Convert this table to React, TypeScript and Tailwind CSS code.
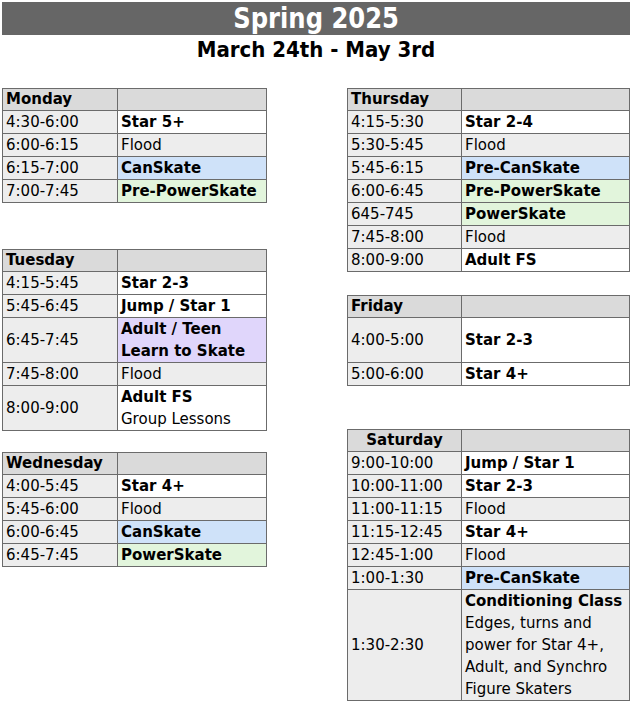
type Line = { text: string; bold?: boolean };

type Row = {
  time: string;
  lines: Line[];
  bg?: "white" | "gray" | "blue" | "green" | "purple";
  tall?: boolean;
};

type Day = {
  name: string;
  center?: boolean;
  rows: Row[];
};

const bgClass = {
  white: "bg-white",
  gray: "bg-[#ededed]",
  blue: "bg-[#cfe2f9]",
  green: "bg-[#e2f5dc]",
  purple: "bg-[#e0d6fb]",
};

const b = (text: string): Line => ({ text, bold: true });
const r = (text: string): Line => ({ text });

const monday: Day = {
  name: "Monday",
  rows: [
    { time: "4:30-6:00", lines: [b("Star 5+")] },
    { time: "6:00-6:15", lines: [r("Flood")], bg: "gray" },
    { time: "6:15-7:00", lines: [b("CanSkate")], bg: "blue" },
    { time: "7:00-7:45", lines: [b("Pre-PowerSkate")], bg: "green" },
  ],
};

const tuesday: Day = {
  name: "Tuesday",
  rows: [
    { time: "4:15-5:45", lines: [b("Star 2-3")] },
    { time: "5:45-6:45", lines: [b("Jump / Star 1")] },
    {
      time: "6:45-7:45",
      lines: [b("Adult / Teen"), b("Learn to Skate")],
      bg: "purple",
    },
    { time: "7:45-8:00", lines: [r("Flood")], bg: "gray" },
    { time: "8:00-9:00", lines: [b("Adult FS"), r("Group Lessons")] },
  ],
};

const wednesday: Day = {
  name: "Wednesday",
  rows: [
    { time: "4:00-5:45", lines: [b("Star 4+")] },
    { time: "5:45-6:00", lines: [r("Flood")], bg: "gray" },
    { time: "6:00-6:45", lines: [b("CanSkate")], bg: "blue" },
    { time: "6:45-7:45", lines: [b("PowerSkate")], bg: "green" },
  ],
};

const thursday: Day = {
  name: "Thursday",
  rows: [
    { time: "4:15-5:30", lines: [b("Star 2-4")] },
    { time: "5:30-5:45", lines: [r("Flood")], bg: "gray" },
    { time: "5:45-6:15", lines: [b("Pre-CanSkate")], bg: "blue" },
    { time: "6:00-6:45", lines: [b("Pre-PowerSkate")], bg: "green" },
    { time: "645-745", lines: [b("PowerSkate")], bg: "green" },
    { time: "7:45-8:00", lines: [r("Flood")], bg: "gray" },
    { time: "8:00-9:00", lines: [b("Adult FS")] },
  ],
};

const friday: Day = {
  name: "Friday",
  rows: [
    { time: "4:00-5:00", lines: [b("Star 2-3")], tall: true },
    { time: "5:00-6:00", lines: [b("Star 4+")] },
  ],
};

const saturday: Day = {
  name: "Saturday",
  center: true,
  rows: [
    { time: "9:00-10:00", lines: [b("Jump / Star 1")] },
    { time: "10:00-11:00", lines: [b("Star 2-3")] },
    { time: "11:00-11:15", lines: [r("Flood")], bg: "gray" },
    { time: "11:15-12:45", lines: [b("Star 4+")] },
    { time: "12:45-1:00", lines: [r("Flood")], bg: "gray" },
    { time: "1:00-1:30", lines: [b("Pre-CanSkate")], bg: "blue" },
    {
      time: "1:30-2:30",
      lines: [
        b("Conditioning Class"),
        r("Edges, turns and"),
        r("power for Star 4+,"),
        r("Adult, and Synchro"),
        r("Figure Skaters"),
      ],
      bg: "gray",
    },
  ],
};

function DayTable({ day, wide }: { day: Day; wide?: boolean }) {
  const cols = wide ? "grid-cols-[114px_168px]" : "grid-cols-[115px_149px]";

  return (
    <div className={`grid ${cols} border-l border-t border-[#6b6b6b]`}>
      <div
        className={`flex h-[22px] items-center border-b border-r border-[#6b6b6b] bg-[#dadada] px-[3px] font-bold ${
          day.center ? "justify-center" : ""
        }`}
      >
        {day.name}
      </div>
      <div className="h-[22px] border-b border-r border-[#6b6b6b] bg-[#dadada]" />

      {day.rows.map((row) => {
        const lineCount = row.tall ? 2 : row.lines.length;
        const height =
          lineCount === 1 ? "h-[23px]" : lineCount === 2 ? "h-[45px]" : "h-[111px]";
        return (
          <div key={row.time} className="contents">
            <div
              className={`flex ${height} items-center border-b border-r border-[#6b6b6b] bg-[#ededed] px-[3px]`}
            >
              {row.time}
            </div>
            <div
              className={`flex ${height} flex-col justify-center border-b border-r border-[#6b6b6b] px-[3px] ${
                bgClass[row.bg ?? "white"]
              }`}
            >
              {row.lines.map((line) => (
                <div
                  key={line.text}
                  className={`whitespace-nowrap leading-[22px] ${line.bold ? "font-bold" : ""}`}
                >
                  {line.text}
                </div>
              ))}
            </div>
          </div>
        );
      })}
    </div>
  );
}

export default function App() {
  return (
    <div
      className="w-[632px] bg-white p-[2px] text-[15px] text-black"
      style={{ fontFamily: '"DejaVu Sans", Verdana, sans-serif' }}
    >
      <div
        className="flex h-[33px] items-center justify-center overflow-hidden bg-[#666666] text-white"
        style={{ fontFamily: '"DejaVu Sans Condensed", "DejaVu Sans", sans-serif' }}
      >
        <span className="scale-x-[0.93] text-[29px] font-bold leading-[33px]">Spring 2025</span>
      </div>
      <div
        className="flex h-[29px] items-center justify-center text-[22px] font-bold"
        style={{ fontFamily: '"DejaVu Sans Condensed", "DejaVu Sans", sans-serif' }}
      >
        March 24th - May 3rd
      </div>

      <div className="mt-[24px] flex">
        <div className="flex w-[265px] flex-col">
          <DayTable day={monday} />
          <div className="mt-[46px]">
            <DayTable day={tuesday} />
          </div>
          <div className="mt-[21px]">
            <DayTable day={wednesday} />
          </div>
        </div>

        <div className="ml-[80px] flex w-[283px] flex-col">
          <DayTable day={thursday} wide />
          <div className="mt-[23px]">
            <DayTable day={friday} wide />
          </div>
          <div className="mt-[43px]">
            <DayTable day={saturday} wide />
          </div>
        </div>
      </div>
    </div>
  );
}
